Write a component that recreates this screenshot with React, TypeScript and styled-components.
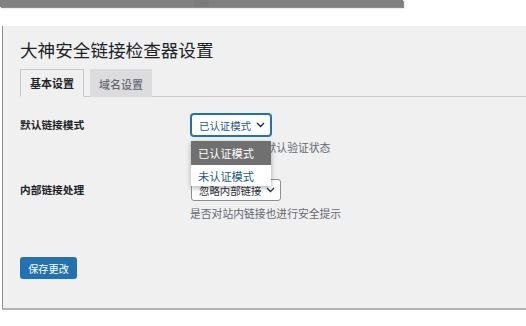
import React from "react";
import styled, { createGlobalStyle } from "styled-components";

const Global = createGlobalStyle`
  html, body { margin: 0; padding: 0; background: #ffffff; }
  body {
    font-family: "Noto Sans CJK SC", "Noto Sans", "Liberation Sans", sans-serif;
    color: #1d2327;
    overflow: hidden;
    width: 526px;
    height: 326px;
  }
`;

const TopBar = styled.div`
  width: 403px;
  height: 7px;
  background: #808080;
  box-shadow: 1px 1px 1px rgba(0, 0, 0, 0.45);
  display: flex;
`;

const TopBarSeg = styled.div<{ $w: number; $dark?: boolean }>`
  width: ${(p) => p.$w}px;
  height: 100%;
  background: ${(p) => (p.$dark ? "#7b7b7b" : "transparent")};
`;

const Panel = styled.div`
  margin: 19px 0 0 2px;
  background: #f0f0f0;
  border-left: 1px solid #8c8c8c;
  border-bottom: 2px solid #b4b4b4;
  padding: 12px 0 28px 17px;
  height: 242px;
`;

const Title = styled.h1`
  margin: 0;
  font-size: 17.6px;
  line-height: 24px;
  font-weight: 400;
  color: #1d2327;
`;

const TabBar = styled.div`
  margin-top: 7px;
  display: flex;
  gap: 6px;
  border-bottom: 1px solid #c9c9cc;
  height: 27px;
`;

const Tab = styled.div<{ $active?: boolean }>`
  box-sizing: border-box;
  height: 28px;
  padding: 0 ${(p) => (p.$active ? 9 : 8)}px;
  display: flex;
  align-items: center;
  font-size: 11px;
  font-weight: ${(p) => (p.$active ? 700 : 500)};
  color: ${(p) => (p.$active ? "#1d2327" : "#646970")};
  background: ${(p) => (p.$active ? "#f0f0f0" : "#dcdcde")};
  border: 1px solid ${(p) => (p.$active ? "#c9c9cc" : "#dcdcde")};
  border-bottom: ${(p) => (p.$active ? "1px solid #f0f0f0" : "none")};
`;

const Form = styled.div`
  padding-top: 17px;
  display: flex;
  flex-direction: column;
`;

const Row = styled.div<{ $mt?: number; $top?: boolean }>`
  display: grid;
  grid-template-columns: 171px auto;
  margin-top: ${(p) => p.$mt ?? 0}px;
  position: relative;
  z-index: ${(p) => (p.$top ? 5 : 1)};
`;

const Label = styled.div`
  font-size: 10.7px;
  font-weight: 700;
  line-height: 22px;
  color: #1d2327;
`;

const Field = styled.div`
  position: relative;
  display: flex;
  flex-direction: column;
  align-items: flex-start;
`;

const SelectBox = styled.div<{ $focus?: boolean }>`
  box-sizing: border-box;
  height: 22px;
  display: flex;
  align-items: center;
  gap: 5px;
  padding: 0 5px 0 7px;
  background: #ffffff;
  border: 1px solid ${(p) => (p.$focus ? "#2271b1" : "#8c8f94")};
  box-shadow: ${(p) => (p.$focus ? "0 0 0 1px #2271b1" : "none")};
  border-radius: 3px;
  font-size: 10.4px;
  color: ${(p) => (p.$focus ? "#1e5a8a" : "#2c3338")};
  white-space: nowrap;
`;

const Chevron = styled.svg`
  width: 9px;
  height: 6px;
  flex: none;
`;

const Desc = styled.div<{ $mt?: number }>`
  margin-top: ${(p) => p.$mt ?? 3}px;
  margin-left: -1px;
  font-size: 10.8px;
  line-height: 16px;
  color: #646970;
  white-space: nowrap;
`;

const Menu = styled.div`
  position: absolute;
  top: 27px;
  left: 0;
  width: 80px;
  z-index: 10;
  background: #ffffff;
  box-shadow: 0 2px 5px rgba(0, 0, 0, 0.3);
  display: flex;
  flex-direction: column;
`;

const MenuItem = styled.div<{ $selected?: boolean; $h: number }>`
  height: ${(p) => p.$h}px;
  flex: none;
  display: flex;
  align-items: center;
  padding-left: 7px;
  font-size: 11.2px;
  color: ${(p) => (p.$selected ? "#ffffff" : "#1e5a8a")};
  background: ${(p) => (p.$selected ? "#707070" : "#ffffff")};
`;

const Button = styled.button`
  margin-top: 36px;
  align-self: flex-start;
  width: 57px;
  height: 22px;
  padding: 0;
  border: none;
  border-radius: 3px;
  background: #2271b1;
  color: #ffffff;
  font-family: inherit;
  font-size: 10.2px;
  display: flex;
  align-items: center;
  justify-content: center;
`;

const ChevronIcon = ({ color }: { color: string }) => (
  <Chevron viewBox="0 0 9 6">
    <polyline points="1,1 4.5,4.5 8,1" fill="none" stroke={color} strokeWidth="1.3" />
  </Chevron>
);

export default function App() {
  return (
    <>
      <Global />
      <TopBar>
        <TopBarSeg $w={194} />
        <TopBarSeg $w={15} $dark />
      </TopBar>
      <Panel>
        <Title>大神安全链接检查器设置</Title>
        <TabBar>
          <Tab $active>基本设置</Tab>
          <Tab>域名设置</Tab>
        </TabBar>
        <Form>
          <Row $top>
            <Label>默认链接模式</Label>
            <Field>
              <SelectBox $focus>
                已认证模式
                <ChevronIcon color="#1d2327" />
              </SelectBox>
              <Desc>设置外部链接的默认验证状态</Desc>
              <Menu>
                <MenuItem $selected $h={24}>已认证模式</MenuItem>
                <MenuItem $h={21}>未认证模式</MenuItem>
              </Menu>
            </Field>
          </Row>
          <Row $mt={24}>
            <Label>内部链接处理</Label>
            <Field>
              <SelectBox>
                忽略内部链接
                <ChevronIcon color="#2c3338" />
              </SelectBox>
              <Desc $mt={4}>是否对站内链接也进行安全提示</Desc>
            </Field>
          </Row>
          <Button>保存更改</Button>
        </Form>
      </Panel>
    </>
  );
}
